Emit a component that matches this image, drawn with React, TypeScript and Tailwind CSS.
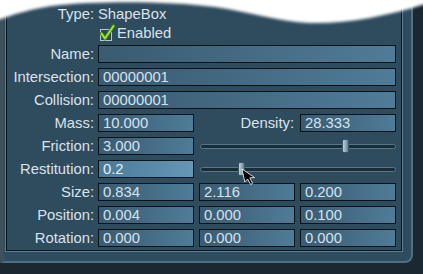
import React from "react";

const field =
  "h-[18px] border border-[#08131a] bg-linear-to-r from-[#3a5b71] to-[#4f7c98] text-[#d6e1ec] pl-[4px] leading-[16px] whitespace-nowrap overflow-hidden";
const fieldHi =
  "h-[18px] border border-[#08131a] bg-linear-to-r from-[#4a7a97] to-[#6598b6] text-[#e6eef6] pl-[4px] leading-[16px] whitespace-nowrap overflow-hidden";

function Label({ children }: { children: React.ReactNode }) {
  return <div className="w-[87px] shrink-0 text-right leading-[18px] whitespace-nowrap">{children}</div>;
}

function Row({ label, children }: { label: string; children: React.ReactNode }) {
  return (
    <div className="flex h-[18px] gap-[4px]">
      <Label>{label}</Label>
      <div className="flex gap-[5px]">{children}</div>
    </div>
  );
}

function Slider({ pos }: { pos: number }) {
  return (
    <div className="relative w-[197px] h-[18px] flex items-center">
      <div className="ml-[1px] w-[196px] h-[5px] rounded-full border border-[#56768a] bg-[#1b2d39]" />
      <div
        className="absolute top-[2px] w-[7px] h-[14px] rounded-[2px] border border-[#3c5868] bg-linear-to-r from-[#c2d2dc] via-[#93adbd] to-[#5f7f93]"
        style={{ left: pos }}
      />
    </div>
  );
}

export default function App() {
  return (
    <div className="relative w-[423px] h-[274px] overflow-hidden bg-[#1b2831] font-['Liberation_Sans',Arial,sans-serif] text-[14.8px] text-[#dae2ec]">
      <div className="w-[413px] h-[263px] bg-[#2f4b5e] border-l-[4px] border-l-[#3e505b] border-r-[2px] border-b-[2px] border-r-[#4f6f82] border-b-[#4f6f82] rounded-br-[8px] pl-[2px]">
        <div className="w-[396px] h-[251px] border border-t-0 border-[#0b1820] shadow-[0_0_0_1px_#5e7b8d] pt-[5px]">
          <div className="flex h-[18px] gap-[4px]">
            <Label>Type:</Label>
            <div className="leading-[18px]">ShapeBox</div>
          </div>
          <div className="flex h-[18px] gap-[4px] mt-[1px]">
            <div className="w-[87px]" />
            <div className="flex items-center gap-[2px]">
              <svg width="17" height="18" viewBox="0 0 17 18">
                <rect x="2.5" y="5.5" width="11" height="11" fill="#2c4758" stroke="#b7c6d0" strokeWidth="1" />
                <path d="M3.5 9.5 L7 14.5 L15.5 2" fill="none" stroke="#3f7a10" strokeWidth="3.6" strokeLinecap="round" strokeLinejoin="round" />
                <path d="M3.5 9.5 L7 14.5 L15.5 2" fill="none" stroke="#9be63a" strokeWidth="2" strokeLinecap="round" strokeLinejoin="round" />
              </svg>
              <div className="leading-[18px]">Enabled</div>
            </div>
          </div>
          <div className="flex flex-col gap-[5px] mt-[3px]">
            <Row label="Name:">
              <div className={`${field} w-[298px]`} />
            </Row>
            <Row label="Intersection:">
              <div className={`${field} w-[298px]`}>00000001</div>
            </Row>
            <Row label="Collision:">
              <div className={`${field} w-[298px]`}>00000001</div>
            </Row>
            <Row label="Mass:">
              <div className={`${field} w-[96px]`}>10.000</div>
              <div className="w-[96px] text-right leading-[18px] pr-[1px]">Density:</div>
              <div className={`${field} w-[96px]`}>28.333</div>
            </Row>
            <Row label="Friction:">
              <div className={`${field} w-[96px]`}>3.000</div>
              <Slider pos={143} />
            </Row>
            <Row label="Restitution:">
              <div className={`${fieldHi} w-[96px]`}>0.2</div>
              <Slider pos={39} />
            </Row>
            <Row label="Size:">
              <div className={`${field} w-[96px]`}>0.834</div>
              <div className={`${field} w-[96px]`}>2.116</div>
              <div className={`${field} w-[96px]`}>0.200</div>
            </Row>
            <Row label="Position:">
              <div className={`${field} w-[96px]`}>0.004</div>
              <div className={`${field} w-[96px]`}>0.000</div>
              <div className={`${field} w-[96px]`}>0.100</div>
            </Row>
            <Row label="Rotation:">
              <div className={`${field} w-[96px]`}>0.000</div>
              <div className={`${field} w-[96px]`}>0.000</div>
              <div className={`${field} w-[96px]`}>0.000</div>
            </Row>
          </div>
        </div>
      </div>

      {/* top white glow */}
      <svg className="absolute left-0 top-0 pointer-events-none" width="423" height="40" viewBox="0 0 423 40">
        <defs>
          <filter id="b" x="-10%" y="-50%" width="120%" height="200%">
            <feGaussianBlur stdDeviation="1.8" />
          </filter>
        </defs>
        <path
          d="M-5 -5 L-5 21 C12 15 32 8 60 5 C100 1 170 1 215 7 C250 12 280 22 310 23 C345 24 385 17 428 3 L428 -5 Z"
          fill="#ffffff"
          filter="url(#b)"
        />
      </svg>

      {/* mouse cursor */}
      <svg className="absolute left-[241px] top-[168px] pointer-events-none" width="16" height="18" viewBox="0 0 16 18">
        <path d="M1 1 L3.8 14 L6.6 11 L9.6 16.5 L11.6 15.4 L8.8 9.8 L13.6 9.6 Z" fill="#000" stroke="#ffffff" strokeWidth="0.8" strokeLinejoin="round" />
      </svg>
    </div>
  );
}
